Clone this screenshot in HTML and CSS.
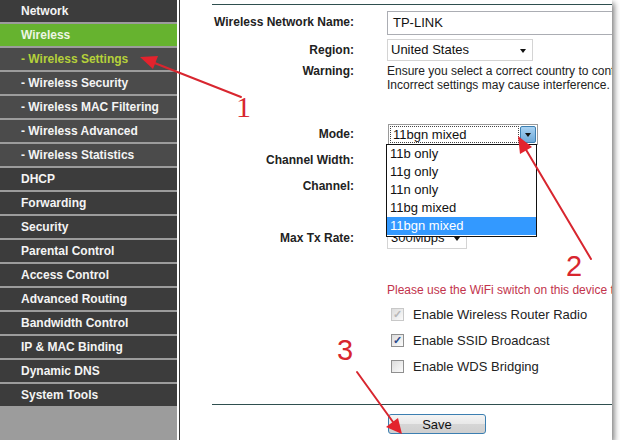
FILE: index.html
```html
<!DOCTYPE html>
<html>
<head>
<meta charset="utf-8">
<link rel="stylesheet" href="styles.css">
</head>
<body>
<div class="frame">
  <nav class="sidebar">
    <div class="item">Network</div>
    <div class="item active">Wireless</div>
    <div class="item sub current">- Wireless Settings</div>
    <div class="item sub">- Wireless Security</div>
    <div class="item sub">- Wireless MAC Filtering</div>
    <div class="item sub">- Wireless Advanced</div>
    <div class="item sub">- Wireless Statistics</div>
    <div class="item">DHCP</div>
    <div class="item">Forwarding</div>
    <div class="item">Security</div>
    <div class="item">Parental Control</div>
    <div class="item">Access Control</div>
    <div class="item">Advanced Routing</div>
    <div class="item">Bandwidth Control</div>
    <div class="item">IP &amp; MAC Binding</div>
    <div class="item">Dynamic DNS</div>
    <div class="item">System Tools</div>
  </nav>
  <main class="content">
    <div class="rule top"></div>
    <div class="row r-name">
      <div class="label">Wireless Network Name:</div>
      <div class="field"><div class="textbox">TP-LINK</div></div>
    </div>
    <div class="row r-region">
      <div class="label">Region:</div>
      <div class="field"><div class="select w145">United States<span class="caret"></span></div></div>
    </div>
    <div class="row r-warn">
      <div class="label">Warning:</div>
      <div class="field text">
        <div>Ensure you select a correct country to conform local law.</div>
        <div>Incorrect settings may cause interference.</div>
      </div>
    </div>
    <div class="row r-std r-mode">
      <div class="label">Mode:</div>
      <div class="field">
        <div class="select mode">
          <span class="focus">11bgn mixed</span>
          <span class="btn"><span class="caret dark"></span></span>
        </div>
      </div>
    </div>
    <div class="row r-std">
      <div class="label">Channel Width:</div>
      <div class="field"><div class="select w100"><span class="caret"></span></div></div>
    </div>
    <div class="row r-std">
      <div class="label">Channel:</div>
      <div class="field"><div class="select w100"><span class="caret"></span></div></div>
    </div>
    <div class="row r-std">
      <div class="label"></div>
      <div class="field"></div>
    </div>
    <div class="row r-std">
      <div class="label">Max Tx Rate:</div>
      <div class="field"><div class="select w79">300Mbps<span class="caret"></span></div></div>
    </div>
    <div class="row r-note">
      <div class="label"></div>
      <div class="field note">Please use the WiFi switch on this device to turn the wireless radio on or off.</div>
    </div>
    <div class="row r-check">
      <div class="label"></div>
      <div class="field"><span class="cb disabled">&#10003;</span>Enable Wireless Router Radio</div>
    </div>
    <div class="row r-check">
      <div class="label"></div>
      <div class="field"><span class="cb checked">&#10003;</span>Enable SSID Broadcast</div>
    </div>
    <div class="row r-check">
      <div class="label"></div>
      <div class="field"><span class="cb"></span>Enable WDS Bridging</div>
    </div>
    <div class="rule bottom"></div>
    <div class="row r-save">
      <div class="label"></div>
      <div class="field"><button class="save">Save</button></div>
    </div>

    <ul class="dropdown">
      <li>11b only</li>
      <li>11g only</li>
      <li>11n only</li>
      <li>11bg mixed</li>
      <li class="sel">11bgn mixed</li>
    </ul>
  </main>

  <svg class="marks" width="612" height="440" viewBox="0 0 612 440">
    <g stroke="#d8262f" stroke-width="2" fill="none" stroke-linecap="round">
      <line x1="241" y1="97" x2="152" y2="62"/>
      <line x1="591" y1="259" x2="525" y2="148"/>
      <line x1="357" y1="372" x2="393" y2="422"/>
    </g>
    <g fill="#e3232d">
      <polygon points="140,57 158,56 153,69"/>
      <polygon points="518,136 520,154 532,147"/>
      <polygon points="402,434 386,427 398,418"/>
    </g>
    <text x="236" y="117" class="num serif">1</text>
    <text x="566" y="276" class="num">2</text>
    <text x="337" y="360" class="num">3</text>
  </svg>
</div>
</body>
</html>
```
FILE: styles.css
```css
* { box-sizing: border-box; }
html, body {
  margin: 0;
  padding: 0;
  background: #ffffff;
  font-family: "Liberation Sans", Arial, sans-serif;
}
.frame {
  position: relative;
  width: 612px;
  height: 440px;
  display: flex;
  overflow: hidden;
  background: #fff;
  box-shadow: 2px 3px 6px rgba(0,0,0,0.55);
}
.sidebar {
  width: 177px;
  margin-right: 2px;
  flex: none;
  background: #9c9c9c;
  display: flex;
  flex-direction: column;
  gap: 2px;
}
.item {
  height: 22px;
  line-height: 22px;
  padding-left: 21px;
  background: #3c3c3c;
  color: #f4f4f4;
  font-size: 12px;
  font-weight: bold;
  white-space: nowrap;
}
.item.sub { background: #4b4b4b; }
.item.active { background: #66b32f; color: #eef6e4; }
.item.current { color: #b5d13a; }

.content {
  position: relative;
  flex: 1;
  border-left: 1px solid #3a3a3a;
  overflow: hidden;
  font-size: 12px;
  color: #222;
}
.rule {
  height: 1px;
  background: #2f4f4f;
  margin-left: 32px;
}
.rule.top { margin-top: 4px; }
.rule.bottom { margin-top: 25px; }

.row {
  display: grid;
  grid-template-columns: 174px 1fr;
  column-gap: 33px;
  align-items: center;
}
.label {
  text-align: right;
  font-weight: bold;
  color: #222;
  white-space: nowrap;
}
.field {
  white-space: nowrap;
  display: flex;
  align-items: center;
}
.r-name { margin-top: 6px; height: 24px; }
.r-name .label { margin-top: -3px; }
.r-region { margin-top: 3px; height: 24px; }
.r-warn { margin-top: 2px; align-items: start; }
.r-warn .label { line-height: 14px; }
.field.text { display: block; line-height: 14px; }
.r-std { height: 26px; }
.r-mode { margin-top: 29px; }
.r-note { margin-top: 32px; height: 14px; }
.note { color: #c2334c; font-size: 12px; }
.r-check { height: 26px; }
.r-note + .r-check { margin-top: 4px; }
.r-save { margin-top: 9px; }

.textbox {
  width: 260px;
  height: 24px;
  border: 1px solid #abadb3;
  border-right: none;
  padding-left: 5px;
  line-height: 22px;
  font-size: 13px;
  color: #111;
}
.select {
  position: relative;
  height: 22px;
  border: 1px solid #d4d4d4;
  padding-left: 3px;
  line-height: 20px;
  font-size: 13px;
  color: #111;
  background: #fff;
}
.w145 { width: 146px; }
.w100 { width: 100px; }
.w79 { width: 80px; }
.caret {
  position: absolute;
  right: 6px;
  top: 9px;
  border-left: 3px solid transparent;
  border-right: 3px solid transparent;
  border-top: 4px solid #111;
}
.select.mode {
  width: 150px;
  height: 21px;
  margin-left: 1px;
  border: 1px solid #9a9a9a;
  padding: 1px;
  display: flex;
}
.focus {
  flex: 1;
  border: 1px dotted #444;
  line-height: 15px;
  padding-left: 2px;
  font-size: 13px;
}
.btn {
  position: relative;
  width: 16px;
  margin-left: 1px;
  background: linear-gradient(#a9d2f2, #6ea9d8);
  border: 1px solid #3c7fb1;
  border-radius: 2px;
}
.btn .caret { right: 4px; top: 6px; }

.dropdown {
  position: absolute;
  left: 206px;
  top: 144px;
  width: 151px;
  margin: 0;
  padding: 0 0 1px 0;
  list-style: none;
  background: #fff;
  border: 1px solid #111;
  font-size: 13px;
  color: #111;
}
.dropdown li {
  height: 18px;
  line-height: 18px;
  padding-left: 3px;
}
.dropdown li.sel { background: #3399ff; color: #fff; }

.cb {
  width: 13px;
  height: 13px;
  margin-left: 4px;
  margin-right: 9px;
  border: 1px solid #8f8f8f;
  background: linear-gradient(135deg, #dcdcdc, #fbfbfb);
  font-size: 11px;
  line-height: 11px;
  text-align: center;
  color: transparent;
  font-weight: bold;
}
.cb.checked { color: #2a4a8c; }
.cb.disabled { color: #b8b8b8; border-color: #c8c8c8; }
.r-check .field { font-size: 13px; color: #222; }

.save {
  width: 98px;
  height: 20px;
  margin-left: 1px;
  border: 1px solid #3c7fb1;
  border-radius: 3px;
  background: linear-gradient(#f4f4f4 0%, #e8e8e8 50%, #d6d6d6 51%, #cfcfcf 100%);
  font-family: "Liberation Sans", Arial, sans-serif;
  font-size: 13px;
  color: #111;
  padding: 0;
}

.marks {
  position: absolute;
  left: 0;
  top: 0;
  pointer-events: none;
}
.num {
  fill: #d8262f;
  font-family: "Liberation Sans", Arial, sans-serif;
  font-size: 29px;
}
.num.serif { font-family: "Liberation Serif", "Times New Roman", serif; font-size: 30px; }
```
